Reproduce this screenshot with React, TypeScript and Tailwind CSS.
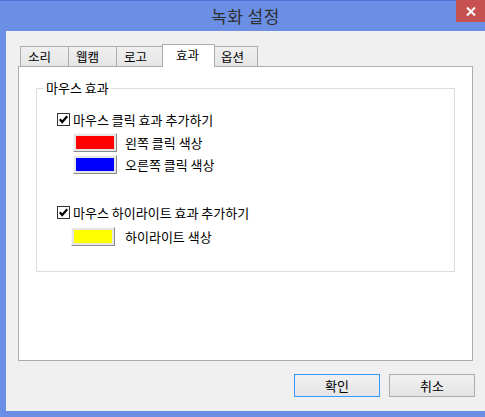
const font = { fontFamily: '"Noto Sans CJK KR", "Noto Sans", sans-serif' };

function Tab({ label, active = false, w }: { label: string; active?: boolean; w: string }) {
  if (active) {
    return (
      <div
        className={`${w} h-[23px] -mb-px -mx-[1px] relative z-10 border border-b-0 border-[#acacac] bg-white pl-[13px] pt-[2px] text-[12.5px] leading-[16px] text-black`}
      >
        {label}
      </div>
    );
  }
  return (
    <div
      className={`${w} h-[20px] border border-b-0 border-[#acacac] -ml-px first:ml-0 bg-gradient-to-b from-[#f0f0f0] to-[#e5e5e5] pl-[7px] pt-[2px] text-[12.5px] leading-[16px] text-black`}
    >
      {label}
    </div>
  );
}

function Check() {
  return (
    <div className="w-[13px] h-[13px] border border-[#333333] bg-white flex items-center justify-center">
      <svg width="11" height="11" viewBox="0 0 11 11">
        <path d="M1.8 5.3 L4.2 8 L9.2 2.3" fill="none" stroke="#000" strokeWidth="2.2" />
      </svg>
    </div>
  );
}

function ColorButton({ color }: { color: string }) {
  return (
    <div className="w-[44px] h-[19px] border border-t-[#f8f8f8] border-l-[#f8f8f8] border-r-[#8c8c8c] border-b-[#8c8c8c] bg-[#e6e6e6] p-[2px]">
      <div className={`w-full h-full ${color}`} />
    </div>
  );
}

export default function App() {
  return (
    <div style={font} className="w-[485px] h-[417px] bg-[#6a8fe5] border-t border-[#4f74d8] flex flex-col">
      {/* Title bar */}
      <div className="relative h-[30px] flex items-center justify-center">
        <span className="text-[17px] text-[#2f2f2f] tracking-wide pl-[6px]">녹화 설정</span>
        <div className="absolute right-0 top-[-1px] w-[29px] h-[22px] bg-[#c75050] flex items-center justify-center">
          <svg width="10" height="9" viewBox="0 0 10 9">
            <path d="M1 0.5 L9 8.5 M9 0.5 L1 8.5" stroke="#fff" strokeWidth="2" />
          </svg>
        </div>
      </div>

      {/* Client */}
      <div className="ml-[6px] h-[380px] bg-[#f0f0f0] pt-[13px] px-[12px] flex flex-col">
        <div className="flex items-end h-[22px] pl-[2px]">
          <Tab label="소리" w="w-[49px]" />
          <Tab label="웹캠" w="w-[49px]" />
          <Tab label="로고" w="w-[47px]" />
          <Tab label="효과" w="w-[53px]" active />
          <Tab label="옵션" w="w-[45px]" />
        </div>

        <div className="h-[295px] border border-[#acacac] bg-white pt-[21px] px-[17px]">
          <div className="relative h-[184px] border border-[#dcdcdc] pt-[24px] pl-[20px]">
            <span className="absolute left-[7px] top-[-9px] bg-white px-[2px] text-[13px] leading-[16px] text-black">
              마우스 효과
            </span>

            <div className="flex items-center gap-[3px] h-[13px]">
              <Check />
              <span className="text-[13px] leading-[16px] text-black">마우스 클릭 효과 추가하기</span>
            </div>
            <div className="mt-[7px] ml-[16px] flex flex-col gap-[3px]">
              <div className="flex items-center gap-[8px]">
                <ColorButton color="bg-[#ff0000]" />
                <span className="text-[13px] leading-[16px] text-black">왼쪽 클릭 색상</span>
              </div>
              <div className="flex items-center gap-[8px]">
                <ColorButton color="bg-[#0000ff]" />
                <span className="text-[13px] leading-[16px] text-black">오른쪽 클릭 색상</span>
              </div>
            </div>

            <div className="mt-[32px] flex items-center gap-[3px] h-[13px]">
              <Check />
              <span className="text-[13px] leading-[16px] text-black">마우스 하이라이트 효과 추가하기</span>
            </div>
            <div className="mt-[8px] ml-[14px] flex items-center gap-[10px]">
              <ColorButton color="bg-[#ffff00]" />
              <span className="text-[13px] leading-[16px] text-black">하이라이트 색상</span>
            </div>
          </div>
        </div>

        <div className="mt-[13px] flex justify-end gap-[9px] -mr-[2px]">
          <button className="w-[86px] h-[23px] border border-[#3399ff] bg-gradient-to-b from-[#f0f0f0] to-[#e5e5e5] text-[13px] text-black">
            확인
          </button>
          <button className="w-[86px] h-[23px] border border-[#acacac] bg-gradient-to-b from-[#f0f0f0] to-[#e5e5e5] text-[13px] text-black">
            취소
          </button>
        </div>
      </div>
    </div>
  );
}
